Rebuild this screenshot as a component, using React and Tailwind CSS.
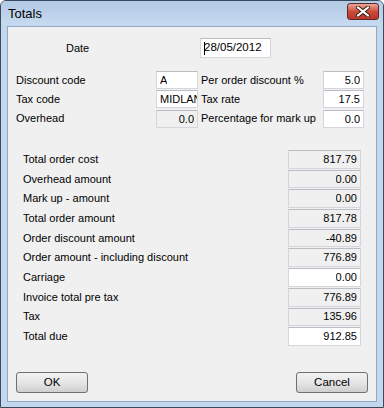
import React from "react";

const font = { fontFamily: '"Liberation Sans", Arial, sans-serif' };

// Windows 7 style text box
function Box({ value, white = false, className = "", caret = false, left = false }) {
  return (
    <div
      className={`flex items-center border border-[#d3d6da] border-t-[#babec4] ${
        white ? "bg-white" : "bg-[#f0f0f0]"
      } ${left ? "justify-start pl-[3px]" : "justify-end pr-[3px]"} overflow-hidden whitespace-nowrap ${className}`}
    >
      {caret && <span className="w-px h-[13px] bg-black -mr-px shrink-0" />}
      <span className="min-w-0 overflow-hidden">{value}</span>
    </div>
  );
}

function Button({ children }) {
  return (
    <button
      type="button"
      className="w-[72px] h-[21px] rounded-[3px] border border-[#707070] bg-gradient-to-b from-[#f2f2f2] via-[#e6e6e6] to-[#cfcfcf] text-[11.5px] text-black leading-none"
      style={font}
    >
      {children}
    </button>
  );
}

const summary = [
  ["Total order cost", "817.79"],
  ["Overhead amount", "0.00"],
  ["Mark up - amount", "0.00"],
  ["Total order amount", "817.78"],
  ["Order discount amount", "-40.89"],
  ["Order amount - including discount", "776.89"],
  ["Carriage", "0.00", true],
  ["Invoice total pre tax", "776.89"],
  ["Tax", "135.96"],
  ["Total due", "912.85", true],
];

export default function App() {
  return (
    <div className="w-[384px] h-[408px] bg-white">
      <div className="w-[384px] h-[408px] flex flex-col rounded-t-[6px] border border-[#3a4a5e] bg-[#c3d7ee] overflow-hidden">
        {/* Title bar */}
        <div className="h-[24px] shrink-0 flex items-center justify-between pl-[7px] pr-[4px] bg-gradient-to-b from-[#b3cae4] to-[#c6daf0]">
          <span className="text-[13px] text-black pt-[1px]" style={font}>
            Totals
          </span>
          <div className="w-[32px] h-[17px] mt-[-3px] rounded-[3px] border border-[#5a2a2a] bg-gradient-to-b from-[#e8a597] via-[#cb4b3a] to-[#b8362a] flex items-center justify-center">
            <svg width="16" height="11" viewBox="0 0 16 11">
              <path
                d="M3 1.5 L13 9.5 M13 1.5 L3 9.5"
                stroke="#3a1f1f"
                strokeWidth="4"
                strokeLinecap="round"
              />
              <path
                d="M3 1.5 L13 9.5 M13 1.5 L3 9.5"
                stroke="#ffffff"
                strokeWidth="2.2"
                strokeLinecap="round"
              />
            </svg>
          </div>
        </div>

        {/* Client area */}
        <div
          className="flex-1 mx-[6px] mb-[5px] mt-[1px] border border-[#8fa8c6] bg-[#f0f0f0] text-[11px] text-black leading-none whitespace-nowrap"
          style={font}
        >
          {/* Date */}
          <div className="flex items-center mt-[11px] h-[20px]">
            <span className="ml-[58px] w-[134px]">Date</span>
            <Box value="28/05/2012" white left caret className="w-[71px] h-[20px] text-[11.5px]" />
          </div>

          {/* Codes */}
          <div className="mt-[13px] grid grid-cols-[140px_42px_3px_122px_41px] gap-y-[1px] pl-[8px] items-center">
            <span>Discount code</span>
            <Box value="A" white left className="h-[18px]" />
            <span />
            <span>Per order discount %</span>
            <Box value="5.0" white className="h-[18px]" />

            <span>Tax code</span>
            <Box value="MIDLANDS" white left className="h-[18px]" />
            <span />
            <span>Tax rate</span>
            <Box value="17.5" white className="h-[18px]" />

            <span>Overhead</span>
            <Box value="0.0" className="h-[18px] mt-[1px]" />
            <span />
            <span>Percentage for mark up</span>
            <Box value="0.0" white className="h-[18px] mt-[1px]" />
          </div>

          {/* Summary */}
          <div className="mt-[22px] flex flex-col gap-[1px] pl-[15px]">
            {summary.map(([label, value, white]) => (
              <div key={label} className="flex items-center h-[18.7px]">
                <span className="w-[265px]">{label}</span>
                <Box value={value} white={white} className="w-[73px] h-[18.7px]" />
              </div>
            ))}
          </div>

          {/* Buttons */}
          <div className="mt-[26px] flex justify-between px-[8px]">
            <Button>OK</Button>
            <Button>Cancel</Button>
          </div>
        </div>
      </div>
    </div>
  );
}
